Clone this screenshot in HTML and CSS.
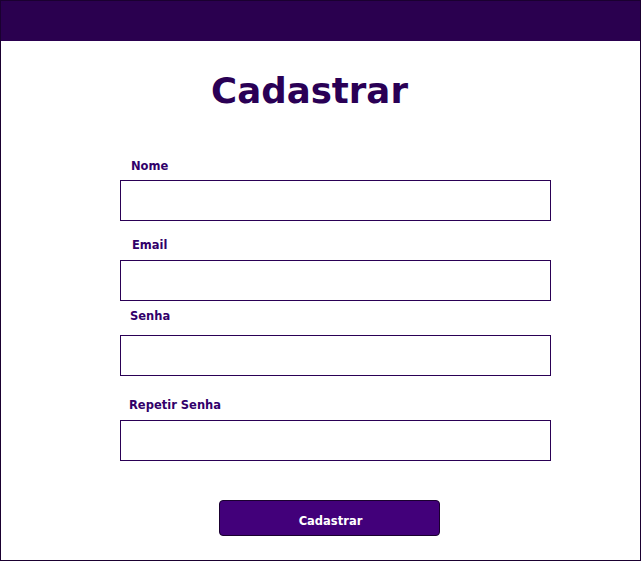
FILE: index.html
```html
<!DOCTYPE html>
<html lang="pt">
<head>
<meta charset="utf-8">
<title>Cadastrar</title>
<link rel="stylesheet" href="styles.css">
</head>
<body>
<div class="page">
  <header class="topbar"></header>
  <h1 class="title">Cadastrar</h1>
  <form class="form">
    <div class="field field-nome">
      <label class="label" for="nome">Nome</label>
      <input class="input" id="nome" type="text">
    </div>
    <div class="field field-email">
      <label class="label" for="email">Email</label>
      <input class="input" id="email" type="email">
    </div>
    <div class="field field-senha">
      <label class="label" for="senha">Senha</label>
      <input class="input" id="senha" type="password">
    </div>
    <div class="field field-repetir">
      <label class="label" for="repetir">Repetir Senha</label>
      <input class="input" id="repetir" type="password">
    </div>
    <div class="actions">
      <button class="btn" type="button">Cadastrar</button>
    </div>
  </form>
</div>
</body>
</html>
```
FILE: styles.css
```css
html, body {
  margin: 0;
  padding: 0;
  background: #ffffff;
}
body {
  font-family: "DejaVu Sans", Verdana, sans-serif;
}
.page {
  box-sizing: border-box;
  width: 641px;
  height: 561px;
  border: 1px solid #1a0030;
  background: #ffffff;
  display: flex;
  flex-direction: column;
}
.topbar {
  height: 40px;
  background: #2a004f;
  flex: none;
}
.title {
  margin: 29px 0 0 0;
  padding-right: 22px;
  font-size: 35.6px;
  line-height: 42px;
  font-weight: bold;
  color: #2a0055;
  text-align: center;
}
.form {
  margin: 47px 0 0 119px;
  width: 431px;
  display: flex;
  flex-direction: column;
}
.field {
  display: flex;
  flex-direction: column;
}
.label {
  display: block;
  font-size: 11.5px;
  line-height: 14px;
  font-weight: bold;
  color: #32006a;
  padding-left: 11px;
}
.input {
  box-sizing: border-box;
  width: 431px;
  height: 41px;
  margin: 0;
  border: 1px solid #2a0055;
  border-radius: 0;
  background: #ffffff;
  padding: 0 8px;
  outline: none;
}
.field-nome .label { margin-bottom: 7px; padding-left: 11px; }
.field-email { margin-top: 17px; }
.field-email .label { margin-bottom: 8px; padding-left: 12px; }
.field-senha { margin-top: 8px; }
.field-senha .label { margin-bottom: 12px; padding-left: 10px; }
.field-repetir { margin-top: 22px; }
.field-repetir .label { margin-bottom: 8px; padding-left: 9px; }
.actions {
  margin-top: 39px;
  padding-left: 99px;
}
.btn {
  box-sizing: border-box;
  width: 221px;
  height: 36px;
  background: #42007a;
  border: 1px solid #1a0030;
  border-radius: 4px;
  color: #ffffff;
  font-family: "DejaVu Sans", Verdana, sans-serif;
  font-size: 11.5px;
  font-weight: bold;
  padding: 5px 0 0 2px;
  cursor: pointer;
}
```
